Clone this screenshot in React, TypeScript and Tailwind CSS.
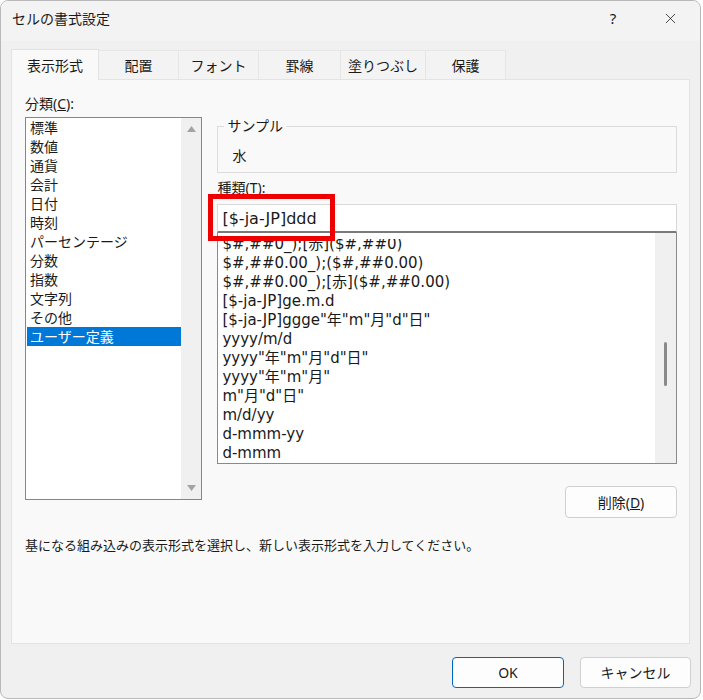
import { X } from "lucide-react";

const categories = [
  "標準",
  "数値",
  "通貨",
  "会計",
  "日付",
  "時刻",
  "パーセンテージ",
  "分数",
  "指数",
  "文字列",
  "その他",
  "ユーザー定義",
];

const formats = [
  "$#,##0_);[赤]($#,##0)",
  "$#,##0.00_);($#,##0.00)",
  "$#,##0.00_);[赤]($#,##0.00)",
  "[$-ja-JP]ge.m.d",
  '[$-ja-JP]ggge"年"m"月"d"日"',
  "yyyy/m/d",
  'yyyy"年"m"月"d"日"',
  'yyyy"年"m"月"',
  'm"月"d"日"',
  "m/d/yy",
  "d-mmm-yy",
  "d-mmm",
];

const tabs = [
  { label: "配置", w: "w-[80px]" },
  { label: "フォント", w: "w-[80px]" },
  { label: "罫線", w: "w-[82px]" },
  { label: "塗りつぶし", w: "w-[85px]" },
  { label: "保護", w: "w-[80px]" },
];

export default function App() {
  return (
    <div className="w-[703px] h-[700px] bg-white">
      <div className="w-[701px] h-[699px] rounded-lg border border-[#b9b9b9] bg-[#f0f0f0] text-[#1a1a1a] flex flex-col overflow-hidden font-['Noto_Sans','Noto_Sans_CJK_JP',sans-serif]">
        {/* Title bar */}
        <div className="h-[40px] flex items-center pb-[5px] bg-[#f3f3f3]">
          <span className="pl-[11px] text-[14px]">セルの書式設定</span>
          <span className="ml-auto w-[30px] text-center text-[15px] mr-[34px]">?</span>
          <X className="w-[17px] h-[17px] mr-[21px]" strokeWidth={1.1} />
        </div>

        {/* Tabs */}
        <div className="flex items-end pl-[10px] mt-[7px] h-[31px] bg-[#f0f0f0]">
          <div className="w-[88px] h-[31px] -mb-px z-10 flex items-center justify-center text-[14px] bg-[#f9f9f9] border border-b-0 border-[#e3e3e3]">
            表示形式
          </div>
          {tabs.map((t) => (
            <div
              key={t.label}
              className={`${t.w} h-[29px] flex items-center justify-center text-[14px] bg-[#f3f3f3] border-t border-r border-[#e6e6e6]`}
            >
              {t.label}
            </div>
          ))}
        </div>

        {/* Panel */}
        <div className="relative mx-[10px] h-[565px] bg-[#f9f9f9] border border-[#e3e3e3] pl-[13px] pr-[12px] pt-[14px]">
          <div className="flex gap-[15px]">
            {/* Left column */}
            <div className="w-[178px]">
              <div className="text-[14px] h-[23px] leading-[20px]">
                分類(<span className="underline">C</span>):
              </div>
              <div className="h-[383px] border border-[#868686] bg-white flex">
                <div className="flex-1 pl-px">
                  {categories.map((c) => (
                    <div
                      key={c}
                      className={`h-[19px] leading-[19px] text-[14px] pl-[3px] ${
                        c === "ユーザー定義" ? "bg-[#0078d7] text-white" : ""
                      }`}
                    >
                      {c}
                    </div>
                  ))}
                </div>
                <div className="w-[20px] bg-[#f0f0f0] flex flex-col items-center justify-between py-[8px]">
                  <svg width="9" height="6" viewBox="0 0 9 6">
                    <path d="M4.5 0 L9 6 L0 6 Z" fill="#a3a3a3" />
                  </svg>
                  <svg width="9" height="6" viewBox="0 0 9 6">
                    <path d="M0 0 L9 0 L4.5 6 Z" fill="#a3a3a3" />
                  </svg>
                </div>
              </div>
            </div>

            {/* Right column */}
            <div className="w-[461px] pt-[32px]">
              <div className="relative h-[47px] border border-[#dcdcdc]">
                <span className="absolute -top-[11px] left-[6px] px-[3px] bg-[#f9f9f9] text-[14px] leading-[20px]">
                  サンプル
                </span>
                <div className="pt-[19px] pl-[14px] text-[14px] leading-[20px]">水</div>
              </div>
              <div className="text-[14px] leading-[20px] h-[31px] pt-[5px]">
                種類(<span className="underline">T</span>):
              </div>
              <div className="h-[29px] bg-white border border-[#d9d9d9] border-b-2 border-b-[#7a7a7a] text-[16px] leading-[27px] pl-[4px] font-['DejaVu_Sans','Noto_Sans_CJK_JP',sans-serif]">
                [$-ja-JP]ddd
              </div>
              <div className="h-[231px] bg-white border border-t-0 border-[#8a8a8a] flex">
                <div className="flex-1 pt-[6px] pl-[4px]">
                  <div className="h-full overflow-hidden">
                    <div className="-mt-[4px] font-['DejaVu_Sans','Noto_Sans_CJK_JP',sans-serif]">
                      {formats.map((f) => (
                        <div key={f} className="h-[19px] leading-[19px] text-[15px] whitespace-nowrap">
                          {f}
                        </div>
                      ))}
                    </div>
                  </div>
                </div>
                <div className="w-[21px] bg-[#f0f0f0] flex justify-center pt-[109px]">
                  <div className="w-[3px] h-[44px] rounded-full bg-[#8a8a8a]" />
                </div>
              </div>
              <div className="flex justify-end mt-[22px]">
                <button className="w-[112px] h-[32px] rounded-[4px] border border-[#d0d0d0] bg-[#fdfdfd] text-[14px]">
                  削除(<span className="underline">D</span>)
                </button>
              </div>
            </div>
          </div>

          <div className="mt-[17px] text-[13px] leading-[20px]">
            基になる組み込みの表示形式を選択し、新しい表示形式を入力してください。
          </div>

          {/* Red annotation box */}
          <div className="absolute left-[196px] top-[114px] w-[127px] h-[47px] border-[5px] border-[#ee0000]" />
        </div>

        {/* Footer buttons */}
        <div className="flex justify-end gap-[16px] pr-[9px] pt-[13px]">
          <button className="w-[112px] h-[31px] rounded-[4px] border border-[#0067c0] bg-[#fdfdfd] text-[14px]">
            OK
          </button>
          <button className="w-[111px] h-[31px] rounded-[4px] border border-[#d0d0d0] bg-[#fdfdfd] text-[14px]">
            キャンセル
          </button>
        </div>
      </div>
    </div>
  );
}
